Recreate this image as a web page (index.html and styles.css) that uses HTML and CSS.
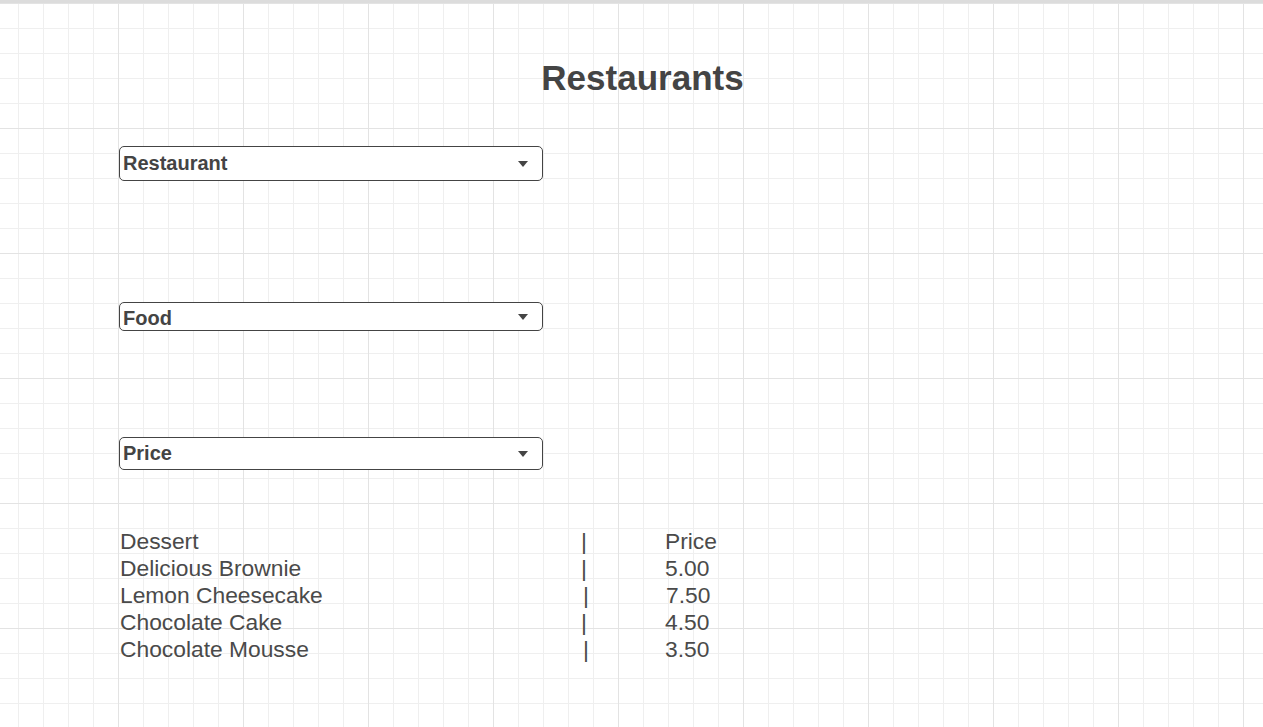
FILE: index.html
```html
<!DOCTYPE html>
<html lang="en">
<head>
<meta charset="utf-8">
<title>Restaurants</title>
<link rel="stylesheet" href="styles.css">
</head>
<body>
<main class="page">
  <h1 class="title">Restaurants</h1>
  <div class="select select-restaurant">
    <span class="select-label">Restaurant</span>
    <span class="select-arrow"></span>
  </div>
  <div class="select select-food">
    <span class="select-label select-label-low">Food</span>
    <span class="select-arrow"></span>
  </div>
  <div class="select select-price">
    <span class="select-label">Price</span>
    <span class="select-arrow"></span>
  </div>
  <div class="menu">
    <span>Dessert</span><span class="sep">|</span><span>Price</span>
    <span>Delicious Brownie</span><span class="sep">|</span><span>5.00</span>
    <span>Lemon Cheesecake</span><span class="sep sep-shift">|</span><span class="price-shift">7.50</span>
    <span>Chocolate Cake</span><span class="sep">|</span><span>4.50</span>
    <span>Chocolate Mousse</span><span class="sep sep-shift">|</span><span>3.50</span>
  </div>
</main>
</body>
</html>
```

FILE: styles.css
```css
html {
  background-color: #ffffff;
}

body {
  margin: 0;
  min-height: 727px;
  border-top: 3px solid #dcdcdc;
  box-sizing: border-box;
  font-family: "Liberation Sans", Arial, sans-serif;
  color: #444444;
  background-color: #ffffff;
  background-image:
    linear-gradient(to right, #e3e3e3 1px, transparent 1px),
    linear-gradient(to bottom, #e3e3e3 1px, transparent 1px),
    linear-gradient(to right, #efefef 1px, transparent 1px),
    linear-gradient(to bottom, #efefef 1px, transparent 1px);
  background-size: 125px 125px, 125px 125px, 25px 25px, 25px 25px;
  background-position: 118px 0, 0 3px, 18px 0, 0 3px;
  background-origin: border-box;
}

.page {
  margin-left: 119px;
  width: 1047px;
  display: flex;
  flex-direction: column;
  align-items: flex-start;
  padding-top: 55px;
}

.title {
  align-self: stretch;
  margin: 0 0 48px 0;
  text-align: center;
  font-size: 35px;
  line-height: 40px;
  font-weight: bold;
  color: #444444;
}

.select {
  box-sizing: border-box;
  width: 424px;
  border: 1px solid #444444;
  border-radius: 5px;
  background: #ffffff;
  display: flex;
  align-items: center;
  justify-content: space-between;
  padding: 0 14px 0 3px;
}

.select-restaurant {
  height: 35px;
}

.select-food {
  height: 29px;
  margin-top: 121px;
}

.select-price {
  height: 33px;
  margin-top: 106px;
}

.select-label {
  font-size: 20px;
  font-weight: bold;
  color: #444444;
}

.select-label-low {
  margin-top: 4px;
}

.select-arrow {
  width: 0;
  height: 0;
  border-left: 5px solid transparent;
  border-right: 5px solid transparent;
  border-top: 6px solid #444444;
}

.menu {
  margin-top: 58px;
  margin-left: 1px;
  display: grid;
  grid-template-columns: 461px 84px auto;
  font-size: 22.8px;
  line-height: 27px;
  color: #4a4a4a;
}

.sep-shift {
  padding-left: 2px;
}

.price-shift {
  padding-left: 1px;
}
```
